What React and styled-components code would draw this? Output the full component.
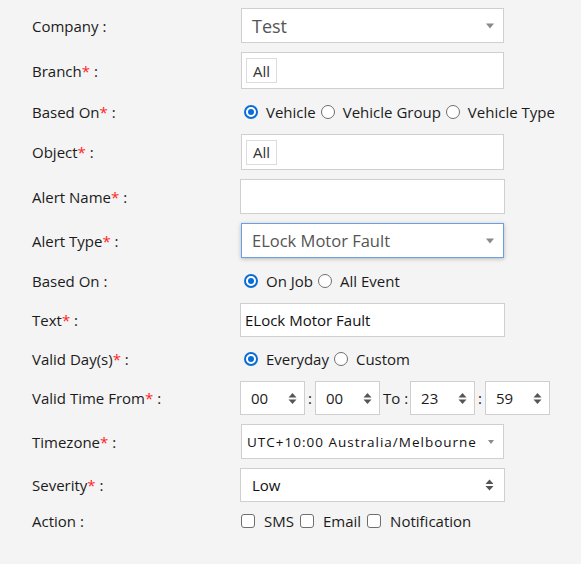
import React from "react";
import styled, { createGlobalStyle } from "styled-components";

const Global = createGlobalStyle`
  html, body { margin: 0; padding: 0; background: #f4f4f4; }
  body { font-family: "Open Sans", "Noto Sans", sans-serif; color: #1b1b1b; }
`;

const Form = styled.div`
  width: 581px;
  height: 564px;
  box-sizing: border-box;
  padding: 8px 0 0 32px;
  display: flex;
  flex-direction: column;
  gap: 9px;
`;

const Row = styled.div`
  display: grid;
  grid-template-columns: 208px 1fr;
  align-items: center;
  height: ${(p) => p.$h}px;
`;

const Label = styled.div`
  font-size: 15px;
  color: #1b1b1b;
  white-space: nowrap;
`;

const Req = styled.span`
  color: #ff1f1f;
`;

const Box = styled.div`
  box-sizing: border-box;
  width: ${(p) => (p.$wide ? 265 : 263)}px;
  margin-left: ${(p) => (p.$wide ? 0 : 1)}px;
  height: 100%;
  background: #fff;
  border: 1px solid ${(p) => (p.$focus ? "#6d9de3" : "#cfcfcf")};
  box-shadow: ${(p) => (p.$focus ? "0 1px 4px rgba(0,0,0,0.25)" : "none")};
  display: flex;
  align-items: center;
  position: relative;
  padding-left: ${(p) => p.$pl ?? 10}px;
`;

const SelText = styled.span`
  font-size: ${(p) => p.$fs}px;
  color: ${(p) => p.$color || "#555"};
  letter-spacing: ${(p) => p.$ls || 0}px;
  white-space: nowrap;
`;

const Caret = styled.span`
  position: absolute;
  right: ${(p) => p.$r}px;
  top: 50%;
  transform: translateY(-50%);
  width: 0;
  height: 0;
  border-left: ${(p) => p.$s}px solid transparent;
  border-right: ${(p) => p.$s}px solid transparent;
  border-top: ${(p) => p.$s + 1}px solid #8a8a8a;
`;

const Tag = styled.span`
  box-sizing: border-box;
  height: 25px;
  width: 31px;
  padding-left: 6px;
  border: 1px solid #dcdcdc;
  font-size: 15px;
  color: #333;
  display: flex;
  align-items: center;
`;

const Options = styled.div`
  display: flex;
  align-items: center;
  font-size: 15px;
  color: #1b1b1b;
  white-space: nowrap;
`;

const Opt = styled.label`
  display: flex;
  align-items: center;
`;

const Radio = styled.span`
  box-sizing: border-box;
  width: 14px;
  height: 14px;
  border-radius: 50%;
  margin: 0 8px 0 ${(p) => (p.$first ? 4 : 5)}px;
  border: ${(p) => (p.$on ? "2px solid #0a6cd6" : "1px solid #6f6f6f")};
  background: #fff;
  display: flex;
  align-items: center;
  justify-content: center;
  &::after {
    content: "";
    width: 6px;
    height: 6px;
    border-radius: 50%;
    background: ${(p) => (p.$on ? "#0a6cd6" : "transparent")};
  }
`;

const Check = styled.span`
  box-sizing: border-box;
  width: 14px;
  height: 14px;
  border-radius: 3px;
  border: 1px solid #6f6f6f;
  background: #fff;
  margin: 0 9px 0 ${(p) => (p.$first ? 1 : 6)}px;
`;

const TimeWrap = styled.div`
  display: flex;
  align-items: center;
  height: 100%;
  font-size: 15px;
  color: #1b1b1b;
`;

const Spin = styled.div`
  box-sizing: border-box;
  width: 65px;
  height: 100%;
  background: #fff;
  border: 1px solid #cfcfcf;
  display: flex;
  align-items: center;
  justify-content: space-between;
  padding: 0 7px 0 10px;
  font-size: 15px;
  color: #1b1b1b;
`;

const Sep = styled.span`
  padding: ${(p) => p.$p};
`;

const UpDown = () => (
  <svg width="9" height="13" viewBox="0 0 9 13">
    <path d="M4.5 1 L8.5 5.5 L0.5 5.5 Z" fill="#555" />
    <path d="M4.5 12 L8.5 7.5 L0.5 7.5 Z" fill="#555" />
  </svg>
);

const UpDownAbs = styled.span`
  position: absolute;
  right: 10px;
  top: 50%;
  transform: translateY(-50%);
  display: flex;
`;

const L = ({ children, req }) => (
  <Label>
    {children}
    {req && <Req>*</Req>} :
  </Label>
);

export default function App() {
  return (
    <>
      <Global />
      <Form>
        <Row $h={35}>
          <L>Company</L>
          <Box>
            <SelText $fs={18}>Test</SelText>
            <Caret $r={9} $s={4.5} />
          </Box>
        </Row>
        <Row $h={37}>
          <L req>Branch</L>
          <Box $pl={4}>
            <Tag>All</Tag>
          </Box>
        </Row>
        <Row $h={27}>
          <L req>Based On</L>
          <Options>
            <Opt><Radio $on $first />Vehicle</Opt>
            <Opt><Radio />Vehicle Group</Opt>
            <Opt><Radio />Vehicle Type</Opt>
          </Options>
        </Row>
        <Row $h={36}>
          <L req>Object</L>
          <Box $pl={4}>
            <Tag>All</Tag>
          </Box>
        </Row>
        <Row $h={35}>
          <L req>Alert Name</L>
          <Box $wide />
        </Row>
        <Row $h={35}>
          <L req>Alert Type</L>
          <Box $focus>
            <SelText $fs={16.5}>ELock Motor Fault</SelText>
            <Caret $r={9} $s={4.5} />
          </Box>
        </Row>
        <Row $h={27}>
          <L>Based On</L>
          <Options>
            <Opt><Radio $on $first />On Job</Opt>
            <Opt><Radio />All Event</Opt>
          </Options>
        </Row>
        <Row $h={34}>
          <L req>Text</L>
          <Box $wide $pl={4}>
            <SelText $fs={15} $color="#111">ELock Motor Fault</SelText>
          </Box>
        </Row>
        <Row $h={26}>
          <L req>Valid Day(s)</L>
          <Options>
            <Opt><Radio $on $first />Everyday</Opt>
            <Opt><Radio />Custom</Opt>
          </Options>
        </Row>
        <Row $h={34}>
          <L req>Valid Time From</L>
          <TimeWrap>
            <Spin>00<UpDown /></Spin>
            <Sep $p="0 3px 0 3px">:</Sep>
            <Spin>00<UpDown /></Spin>
            <Sep $p="0 2px 0 3px">To :</Sep>
            <Spin>23<UpDown /></Spin>
            <Sep $p="0 3px 0 3px">:</Sep>
            <Spin>59<UpDown /></Spin>
          </TimeWrap>
        </Row>
        <Row $h={35}>
          <L req>Timezone</L>
          <Box $pl={5}>
            <SelText $fs={13.5} $color="#111" $ls={1}>UTC+10:00 Australia/Melbourne</SelText>
            <Caret $r={9} $s={3} />
          </Box>
        </Row>
        <Row $h={34}>
          <L req>Severity</L>
          <Box $wide $pl={11}>
            <SelText $fs={15} $color="#111">Low</SelText>
            <UpDownAbs><UpDown /></UpDownAbs>
          </Box>
        </Row>
        <Row $h={20}>
          <L>Action</L>
          <Options>
            <Opt><Check $first />SMS</Opt>
            <Opt><Check />Email</Opt>
            <Opt><Check />Notification</Opt>
          </Options>
        </Row>
      </Form>
    </>
  );
}
